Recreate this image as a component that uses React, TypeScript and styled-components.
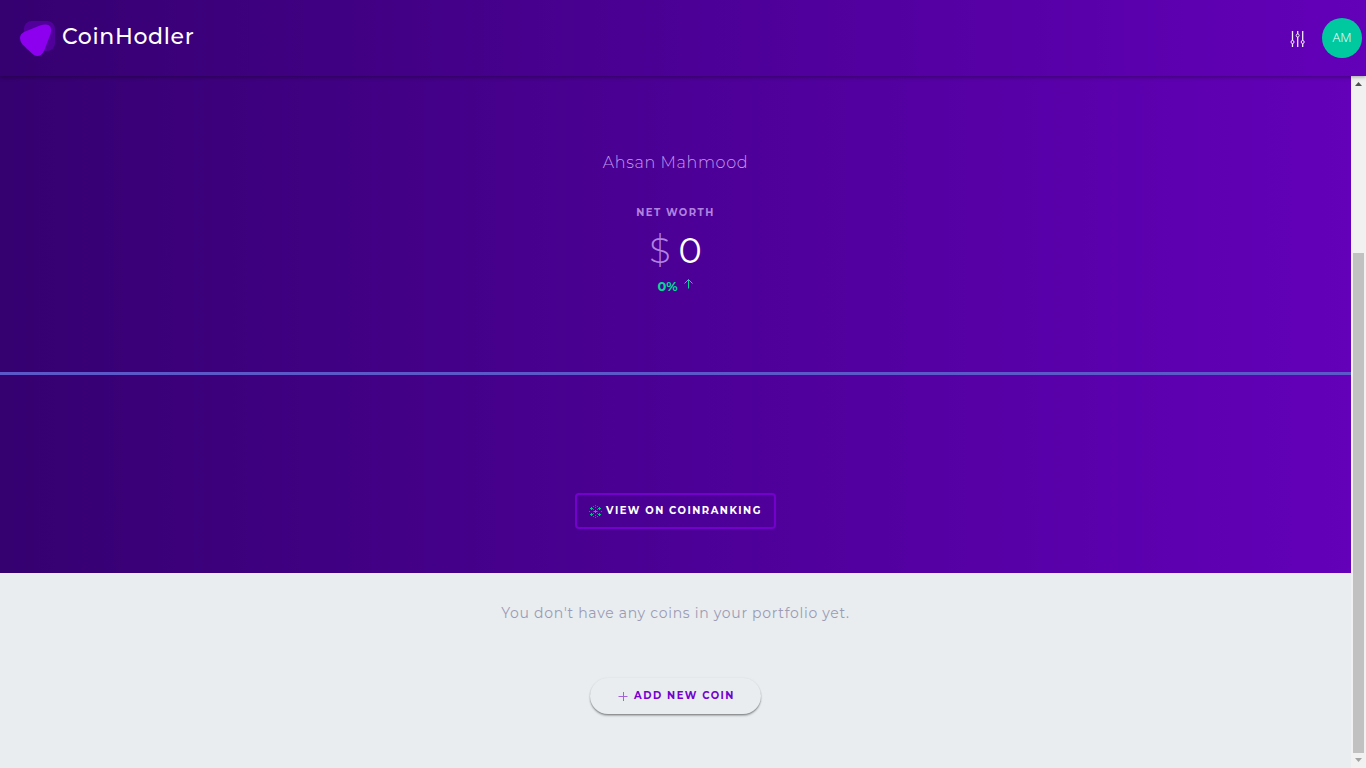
import React from "react";
import styled, { createGlobalStyle } from "styled-components";

const fontStack = `Montserrat, Inter, "Liberation Sans", sans-serif`;
const purple = "linear-gradient(90deg, #350070 0%, #4c0096 50%, #6300b9 100%)";

const GlobalStyle = createGlobalStyle`
  *, *::before, *::after { box-sizing: border-box; }
  body { margin: 0; background: #e9edf0; font-family: ${fontStack}; }
  button { cursor: pointer; }
`;

const Shell = styled.div`
  display: flex;
  flex-direction: column;
  height: 100vh;
`;

const Header = styled.header`
  position: relative;
  z-index: 1;
  display: flex;
  align-items: center;
  justify-content: space-between;
  flex: none;
  height: 76px;
  padding: 0 4px 0 20px;
  background: ${purple};
  box-shadow: 0 1px 4px rgba(0, 0, 0, 0.35);
`;

const Brand = styled.a`
  display: flex;
  align-items: center;
  gap: 6px;
  color: #fff;
  font-size: 22px;
  font-weight: 500;
  line-height: 28px;
  letter-spacing: 0.03em;
  text-decoration: none;

  span { padding-bottom: 2px; }
`;

const Actions = styled.div`
  display: flex;
  align-items: center;
  gap: 16px;
`;

const IconButton = styled.button`
  display: flex;
  padding: 2px 0 0;
  border: 0;
  background: none;
`;

const Avatar = styled.button`
  width: 40px;
  height: 40px;
  padding: 0 0 2px;
  border: 0;
  border-radius: 50%;
  background: #00c9a0;
  color: #fff;
  font-family: "Open Sans", "Noto Sans", sans-serif;
  font-size: 13px;
  font-weight: 300;
`;

const Body = styled.div`
  display: flex;
  flex: 1;
  min-height: 0;
`;

const Content = styled.main`
  flex: 1;
  min-width: 0;
  overflow: hidden;
`;

const Hero = styled.section`
  display: flex;
  flex-direction: column;
  align-items: center;
  padding: 75px 0 44px;
  background: ${purple};
`;

const UserName = styled.h1`
  margin: 0;
  color: #c299ee;
  font-size: 16px;
  font-weight: 300;
  line-height: 24px;
  letter-spacing: 0.04em;
`;

const Label = styled.p`
  margin: 30px 0 0;
  color: #b183e0;
  font-size: 10px;
  font-weight: 700;
  line-height: 16px;
  letter-spacing: 0.15em;
`;

const Worth = styled.p`
  display: flex;
  gap: 8px;
  margin: 8px 0 0;
  color: #fff;
  font-size: 35px;
  line-height: 44px;

  span { color: #b083e2; font-weight: 300; }
`;

const Change = styled.p`
  display: flex;
  align-items: flex-start;
  gap: 6px;
  margin: 5px 0 0;
  color: #00dc94;
  font-size: 13px;
  font-weight: 700;
  line-height: 16px;
`;

const ChartLine = styled.div`
  align-self: stretch;
  height: 3px;
  margin: 78px 0 118px;
  background: #5b58ca;
`;

const RankingButton = styled.button`
  display: flex;
  align-items: center;
  gap: 4px;
  height: 36px;
  padding: 0 12px;
  border: 2px solid #7400cb;
  border-radius: 4px;
  background: transparent;
  color: #fff;
  font-family: inherit;
  font-size: 10px;
  font-weight: 700;
  letter-spacing: 0.15em;

  span { padding-bottom: 2px; }
`;

const Portfolio = styled.section`
  display: flex;
  flex-direction: column;
  align-items: center;
  padding: 28px 0 52px;
`;

const Empty = styled.p`
  margin: 0;
  color: #9b9bb4;
  font-size: 14px;
  line-height: 24px;
  letter-spacing: 0.05em;
`;

const AddButton = styled.button`
  display: flex;
  align-items: center;
  gap: 6px;
  height: 36px;
  margin-top: 53px;
  padding: 0 26px 0 28px;
  border: 0;
  border-radius: 18px;
  background: #e9edf0;
  box-shadow: 0 2px 2px rgba(0, 0, 0, 0.24), 0 1px 1px rgba(0, 0, 0, 0.2), 0 0 2px rgba(0, 0, 0, 0.08);
  color: #7600cf;
  font-family: inherit;
  font-size: 10px;
  font-weight: 700;
  letter-spacing: 0.15em;

  span { padding-bottom: 2px; }
`;

const Scrollbar = styled.div`
  display: flex;
  flex-direction: column;
  align-items: center;
  flex: none;
  width: 15px;
  padding: 6px 0;
  background: #f1f1f1;

  svg { flex: none; }
`;

const Track = styled.div`
  display: flex;
  flex-direction: column;
  flex: 1;
  width: 11px;
  margin: 5px 0;
`;

const Before = styled.div`
  flex: 162;
`;

const Thumb = styled.div`
  flex: 500;
  background: #c1c1c1;
`;

const Logo = () => (
  <svg width="36" height="38" viewBox="0 0 36 38" aria-hidden="true">
    <rect x="4" y="2" width="31" height="30" rx="8" fill="#52009c" />
    <path d="M4 13 L20 6.500 Q28 4 30.500 8 Q32 11 30.500 15 L24 32 Q21 37.500 17 37 Q14 36.500 12 34.500 L2 25 Q0 22 0 19 Q0 15 4 13Z" fill="#8d00ef" />
  </svg>
);

const Sliders = () => (
  <svg width="16" height="18" viewBox="0 0 16 18" fill="none" stroke="#f3eafb" aria-hidden="true">
    <path d="M2.500 1V10.500M2.500 13.500V17M7.700 1V4M7.700 7V17M12.700 1V10.500M12.700 13.500V17" strokeWidth="1.300" />
    <circle cx="2.500" cy="12" r="1.500" />
    <circle cx="7.700" cy="5.500" r="1.500" />
    <circle cx="12.700" cy="12" r="1.500" />
  </svg>
);

const Up = () => (
  <svg width="10" height="12" viewBox="0 0 10 12" fill="none" stroke="#00dc94" aria-hidden="true">
    <path d="M4.500 10.500V1.500M0.500 5.500L4.500 1.500L8.500 5.500" />
  </svg>
);

const Snow = () => (
  <svg width="13" height="13" viewBox="0 0 13 13" fill="none" stroke="#08b98c" aria-hidden="true">
    <path d="M4.500 6.500H8.500M6.500 5V8M1 3.500H4M2.500 2V5M9 3.500H12M10.500 2V5M1 9.500H4M2.500 8V11M9 9.500H12M10.500 8V11" />
    <path d="M6 .5H7M6 12.500H7M6 2.500H7M6 10.500H7M0 6.500H1M12 6.500H13M4 1.500H5M8 1.500H9M4 11.500H5M8 11.500H9M4 4.500H5M8 4.500H9M4 8.500H5M8 8.500H9" opacity=".7" />
  </svg>
);

const Plus = () => (
  <svg width="10" height="10" viewBox="0 0 10 10" stroke="#a363da" aria-hidden="true">
    <path d="M0.500 5.500H9.500M5.500 1V10" />
  </svg>
);

const Arrow = ({ down = false }: { down?: boolean }) => (
  <svg width="7" height="4" viewBox="0 0 7 4" aria-hidden="true">
    <path d={down ? "M0 0H7L3.500 4Z" : "M0 4H7L3.500 0Z"} fill={down ? "#a3a3a3" : "#505050"} />
  </svg>
);

export default function App() {
  return (
    <Shell>
      <GlobalStyle />
      <Header>
        <Brand href="#"><Logo /><span>CoinHodler</span></Brand>
        <Actions>
          <IconButton aria-label="Settings"><Sliders /></IconButton>
          <Avatar>AM</Avatar>
        </Actions>
      </Header>
      <Body>
        <Content>
          <Hero>
            <UserName>Ahsan Mahmood</UserName>
            <Label>NET WORTH</Label>
            <Worth><span>$</span>0</Worth>
            <Change>0% <Up /></Change>
            <ChartLine />
            <RankingButton><Snow /><span>VIEW ON COINRANKING</span></RankingButton>
          </Hero>
          <Portfolio>
            <Empty>You don't have any coins in your portfolio yet.</Empty>
            <AddButton><Plus /><span>ADD NEW COIN</span></AddButton>
          </Portfolio>
        </Content>
        <Scrollbar aria-hidden="true">
          <Arrow />
          <Track><Before /><Thumb /></Track>
          <Arrow down />
        </Scrollbar>
      </Body>
    </Shell>
  );
}
